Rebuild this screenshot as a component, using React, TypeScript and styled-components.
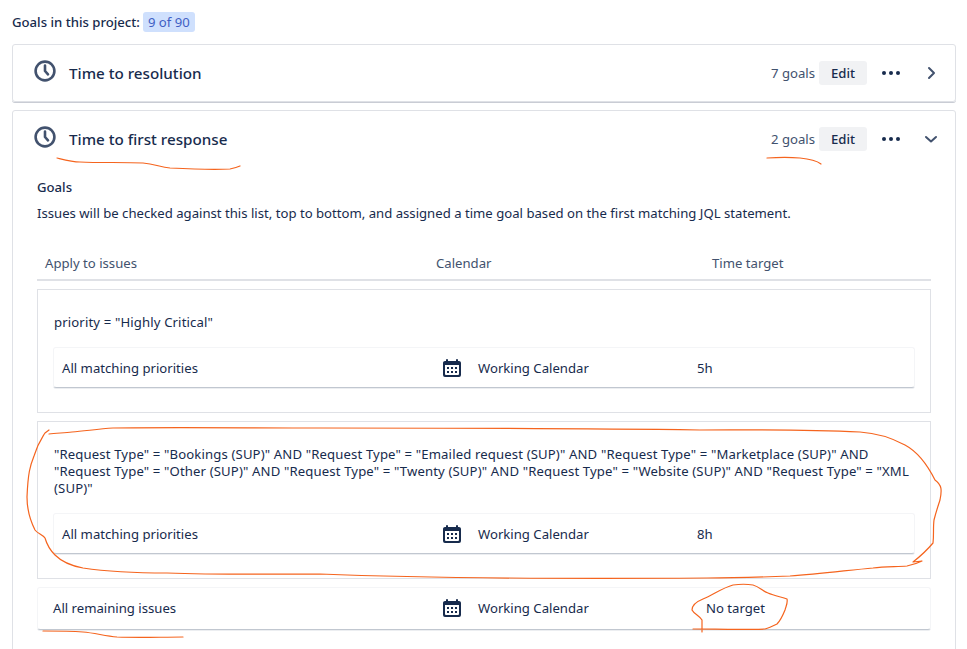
import styled, { createGlobalStyle } from "styled-components";

const GlobalStyle = createGlobalStyle`
  html, body {
    margin: 0;
    padding: 0;
    background: #fff;
  }
  body {
    font-family: "Noto Sans", "Open Sans", sans-serif;
    font-size: 13.15px;
    color: #172b4d;
  }
`;

const Page = styled.div`
  position: relative;
  width: 967px;
  height: 649px;
  overflow: hidden;
  padding: 12px 11px 0 12px;
  box-sizing: border-box;
`;

const Summary = styled.div`
  display: flex;
  align-items: center;
  gap: 3px;
  height: 20px;
  margin-bottom: 12px;
  font-weight: 500;
`;

const Badge = styled.span`
  background: #cfe0fd;
  color: #3f5fc4;
  border-radius: 3px;
  padding: 0 5px;
  height: 20px;
  line-height: 20px;
  font-weight: 400;
`;

const Card = styled.section`
  border: 1px solid #dfe1e6;
  border-radius: 3px;
  box-shadow: 0 1px 0 #c9ccd4;
  margin-bottom: 8px;
  box-sizing: border-box;
`;

const CardHead = styled.header`
  display: flex;
  align-items: center;
  height: 56px;
  padding: 0 8px 0 20px;
`;

const CardTitle = styled.h2`
  flex: 1;
  margin: 0 0 0 12px;
  font-size: 15.2px;
  font-weight: 500;
  color: #172b4d;
`;

const GoalCount = styled.span`
  color: #42526e;
  margin-right: 4px;
`;

const EditButton = styled.button`
  width: 48px;
  height: 24px;
  border: 0;
  border-radius: 3px;
  background: #f1f2f4;
  color: #172b4d;
  font: 500 13.15px "Noto Sans", sans-serif;
  padding: 0;
`;

const IconSlot = styled.span`
  display: flex;
  align-items: center;
  justify-content: center;
  width: ${(p: { $w: number }) => p.$w}px;
`;

const ClockSvg = styled.svg`
  margin-bottom: 5px;
`;

const CardBody = styled.div`
  padding: 0 24px 60px;
`;

const GoalsTitle = styled.h3`
  margin: 0;
  font-size: 13.15px;
  font-weight: 500;
  line-height: 18px;
  padding-top: 11px;
`;

const GoalsHelp = styled.p`
  margin: 8px 0 0;
  line-height: 18px;
  color: #172b4d;
`;

const TableHead = styled.div`
  display: grid;
  grid-template-columns: 391px 276px 1fr;
  padding-left: 8px;
  margin-top: 31px;
  height: 28px;
  line-height: 20px;
  color: #42526e;
  border-bottom: 2px solid #dfe1e6;
  box-sizing: border-box;
`;

const RuleBox = styled.div`
  border: 1px solid #dfe1e6;
  margin-top: 8px;
  padding: 24px 15px 24px;
  box-sizing: border-box;
`;

const RuleQuery = styled.div`
  line-height: 17px;
  margin-bottom: 16px;
  padding-left: 1px;
  letter-spacing: 0.13px;
`;

const MatchRow = styled.div`
  display: grid;
  grid-template-columns: 380px 36px 219px 1fr;
  align-items: center;
  height: 41px;
  padding-left: 8px;
  border: 1px solid #f4f5f7;
  border-bottom: 1px solid #c1c7d0;
  border-radius: 3px;
  box-shadow: 0 1px 0 #eceef1;
  box-sizing: border-box;
`;

const RemainingRow = styled(MatchRow)`
  grid-template-columns: 389px 36px 228px 1fr;
  height: 43px;
  margin-top: 8px;
  padding-left: 15px;
  padding-bottom: 2px;
`;

const CalendarSvg = styled.svg`
  margin-left: -2px;
`;

const Scribbles = styled.svg`
  position: absolute;
  left: 0;
  top: 0;
  pointer-events: none;
  fill: none;
  stroke: #f5641e;
  stroke-width: 1.2;
  stroke-linecap: round;
  stroke-linejoin: round;
`;

const ClockIcon = () => (
  <ClockSvg width="24" height="24" viewBox="0 0 24 24" fill="none" stroke="#42526e" strokeWidth="2.6">
    <circle cx="12" cy="12" r="9.4" />
    <path d="M12 6.5V12l3 3.4" strokeLinecap="round" strokeLinejoin="round" />
  </ClockSvg>
);

const CalendarIcon = () => (
  <CalendarSvg width="24" height="24" viewBox="0 0 24 24">
    <path
      fill="#172b4d"
      fillRule="evenodd"
      d="M4.995 5h14.01C20.107 5 21 5.895 21 6.994v12.012A1.994 1.994 0 0119.005 21H4.995A1.995 1.995 0 013 19.006V6.994C3 5.893 3.892 5 4.995 5zM5 9v9a1 1 0 001 1h12a1 1 0 001-1V9H5zm1-5a1 1 0 012 0v1H6V4zm10 0a1 1 0 012 0v1h-2V4zm-9 7v2h2v-2H7zm8 0v2h2v-2h-2zm-4 0v2h2v-2h-2zm-4 4v2h2v-2H7zm4 0v2h2v-2h-2zm4 0v2h2v-2h-2z"
    />
  </CalendarSvg>
);

const DotsIcon = () => (
  <svg width="20" height="6" viewBox="0 0 20 6" fill="#172b4d">
    <circle cx="3" cy="3" r="2" />
    <circle cx="10" cy="3" r="2" />
    <circle cx="17" cy="3" r="2" />
  </svg>
);

const ChevronIcon = ({ open }: { open: boolean }) => (
  <svg width="14" height="14" viewBox="0 0 14 14" fill="none" stroke="#42526e" strokeWidth="2" strokeLinecap="round" strokeLinejoin="round">
    <path d={open ? "M2 5l5 4.500L12 5" : "M5 2L10 7 5 12"} />
  </svg>
);

const Head = ({ title, goals, open }: { title: string; goals: string; open: boolean }) => (
  <CardHead>
    <ClockIcon />
    <CardTitle>{title}</CardTitle>
    <GoalCount>{goals}</GoalCount>
    <EditButton>Edit</EditButton>
    <IconSlot $w={48}>
      <DotsIcon />
    </IconSlot>
    <IconSlot $w={32}>
      <ChevronIcon open={open} />
    </IconSlot>
  </CardHead>
);

const Match = ({ time }: { time: string }) => (
  <MatchRow>
    <span>All matching priorities</span>
    <CalendarIcon />
    <span>Working Calendar</span>
    <span>{time}</span>
  </MatchRow>
);

function App() {
  return (
    <Page>
      <GlobalStyle />
      <Summary>
        Goals in this project: <Badge>9 of 90</Badge>
      </Summary>

      <Card>
        <Head title="Time to resolution" goals="7 goals" open={false} />
      </Card>

      <Card>
        <Head title="Time to first response" goals="2 goals" open />
        <CardBody>
          <GoalsTitle>Goals</GoalsTitle>
          <GoalsHelp>
            Issues will be checked against this list, top to bottom, and assigned a time goal based on the first
            matching JQL statement.
          </GoalsHelp>
          <TableHead>
            <span>Apply to issues</span>
            <span>Calendar</span>
            <span>Time target</span>
          </TableHead>

          <RuleBox>
            <RuleQuery>priority = "Highly Critical"</RuleQuery>
            <Match time="5h" />
          </RuleBox>

          <RuleBox>
            <RuleQuery>
              "Request Type" = "Bookings (SUP)" AND "Request Type" = "Emailed request (SUP)" AND "Request Type" =
              "Marketplace (SUP)" AND "Request Type" = "Other (SUP)" AND "Request Type" = "Twenty (SUP)" AND "Request
              Type" = "Website (SUP)" AND "Request Type" = "XML (SUP)"
            </RuleQuery>
            <Match time="8h" />
          </RuleBox>

          <RemainingRow>
            <span>All remaining issues</span>
            <CalendarIcon />
            <span>Working Calendar</span>
            <span>No target</span>
          </RemainingRow>
        </CardBody>
      </Card>

      <Scribbles width="967" height="649" viewBox="0 0 967 649">
        <path d="M57 158C65 160 72 162 80 162C100 163 125 162 143 163C155 164 160 167 170 168C190 169 210 170 230 169C235 168 238 167 240 166" />
        <path d="M767 158C780 157 790 157 800 158C810 159 817 161 821 164" />
        <path d="M49 430L45 433C40 441 38 443 34 456C30 466 28 473 27 497C27 510 31 522 35 530C38 534 42 534 45 538C47 545 50 550 55 555C62 562 72 566 83 568C110 572 140 573 167 573C220 575 280 574 320 574C420 578 560 579 707 578C740 578 765 577 790 576C820 574 850 570 873 568C885 566 897 567 907 566C912 565 918 563 922 561L913 562C922 555 928 549 933 543C934 535 933 528 934 520C936 512 938 506 940 500C942 490 942 485 935 480C928 466 918 452 905 445C890 437 875 433 860 432C800 429 750 430 700 430C560 428 430 428 320 428C250 428 170 427 113 428C98 429 85 431 72 432C64 433 56 433 49 434" />
        <path d="M43 631C55 631 70 631 83 632C95 633 105 636 117 637C140 638 160 637 183 637" />
        <path d="M702 632C702 628 702 624 702 620C700 616 694 614 692 610C692 605 698 601 703 599C713 595 722 588 733 585C740 584 747 584 753 585C760 587 762 591 768 593C775 596 782 597 787 599C788 603 786 606 785 610C783 615 781 620 777 624C773 626 769 628 765 629C740 630 715 629 693 629" />
      </Scribbles>
    </Page>
  );
}

export default App;
